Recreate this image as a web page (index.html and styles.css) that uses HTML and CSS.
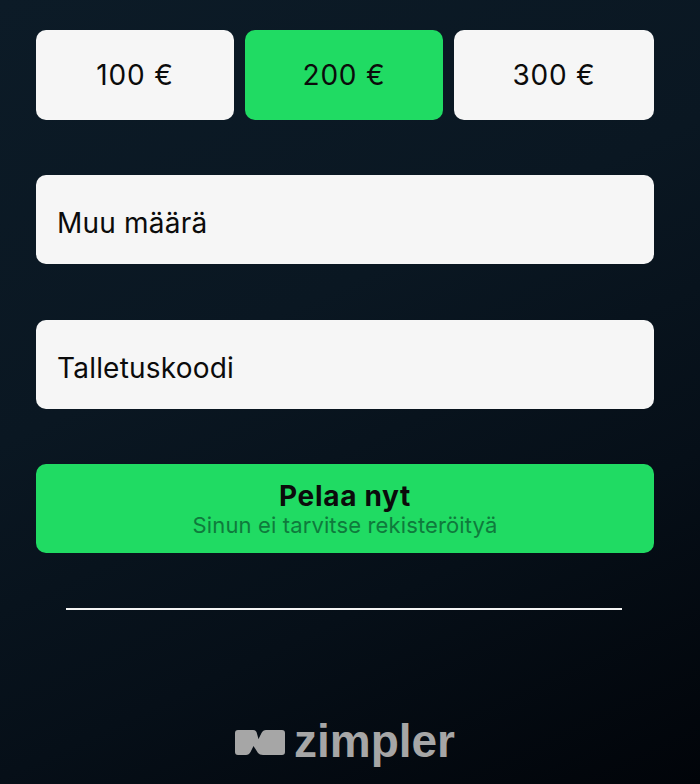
FILE: index.html
```html
<!DOCTYPE html>
<html lang="fi">
<head>
<meta charset="UTF-8">
<meta name="viewport" content="width=device-width, initial-scale=1.0">
<title>Talletus</title>
<link rel="stylesheet" href="styles.css">
</head>
<body>
    <div class="page">
        <div class="amounts">
            <button type="button" class="amount">100 €</button>
            <button type="button" class="amount active">200 €</button>
            <button type="button" class="amount">300 €</button>
        </div>
        <div class="field">Muu määrä</div>
        <div class="field">Talletuskoodi</div>
        <button type="button" class="play">
            <span class="play-title">Pelaa nyt</span>
            <span class="play-sub">Sinun ei tarvitse rekisteröityä</span>
        </button>
        <div class="divider"></div>
        <div class="logo">
            <svg class="logo-mark" width="50" height="25" viewBox="0 0 50 25">
                <path d="M3 0 H18 Q20.5 0 21.5 2 L23.5 9 L26.5 3 Q28 0 31 0 H47 Q50 0 50 3 V22 Q50 25 47 25 H28 Q24.5 25 23 23 L18.5 16 L15.5 22 Q14 25 11 25 H3 Q0 25 0 22 V3 Q0 0 3 0 Z" fill="#a6a6a6"/>
            </svg>
            <span class="logo-text">zimpler</span>
        </div>
    </div>
</body>
</html>
```

FILE: styles.css
```css
* {
    box-sizing: border-box;
}

html, body {
    margin: 0;
    height: 100%;
}

body {
    background: linear-gradient(155deg, #0c1b27 0%, #0a1722 40%, #060f18 70%, #010409 100%);
    font-family: "Inter", "Roboto", sans-serif;
    color: #0b0b0b;
    overflow: hidden;
}

.page {
    display: flex;
    flex-direction: column;
    height: 784px;
    padding: 30px 46px 0 36px;
}

.amounts {
    display: grid;
    grid-template-columns: 198px 198px 1fr;
    gap: 11px;
}

.amount {
    height: 90px;
    border: none;
    border-radius: 10px;
    background: #f6f6f6;
    color: #0b0b0b;
    font-family: inherit;
    font-size: 28px;
    letter-spacing: 0.8px;
    padding: 0;
}

.amount.active {
    background: #20db63;
}

.field {
    display: flex;
    align-items: center;
    height: 89px;
    margin-top: 55px;
    padding: 6px 0 0 21px;
    border-radius: 10px;
    background: #f6f6f6;
    font-size: 28px;
    letter-spacing: 0.2px;
}

.field + .field {
    margin-top: 56px;
}

.play {
    display: flex;
    flex-direction: column;
    align-items: center;
    justify-content: center;
    height: 89px;
    margin-top: 55px;
    padding: 0;
    border: none;
    border-radius: 10px;
    background: #20db63;
    font-family: inherit;
    color: #0b0b0b;
}

.play-title {
    font-size: 28px;
    font-weight: 700;
    letter-spacing: 0.7px;
    line-height: 32px;
}

.play-sub {
    font-size: 22px;
    letter-spacing: 0.13px;
    line-height: 26px;
    color: #0f7a3c;
}

.divider {
    height: 2px;
    margin: 55px 32px 0 30px;
    background: #f4f4f4;
}

.logo {
    display: flex;
    align-items: center;
    justify-content: center;
    gap: 9px;
    margin-top: 107px;
}

.logo-mark {
    margin-top: 2px;
}

.logo-text {
    font-family: "Liberation Sans", sans-serif;
    font-size: 46px;
    font-weight: 700;
    line-height: 48px;
    color: #a6a6a6;
}
```
